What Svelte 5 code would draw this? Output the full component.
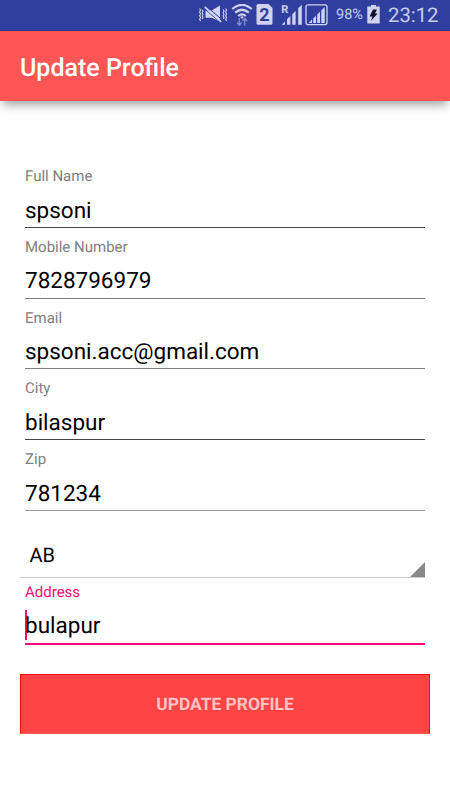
<script>
	let fields = [
		{ id: "name", label: "Full Name", value: "spsoni", line: "dark" },
		{ id: "mobile", label: "Mobile Number", value: "7828796979", line: "mid" },
		{ id: "email", label: "Email", value: "spsoni.acc@gmail.com", line: "mid" },
		{ id: "city", label: "City", value: "bilaspur", line: "dark" },
		{ id: "zip", label: "Zip", value: "781234", line: "soft" }
	];
	let state = "AB";
	let address = "bulapur";
</script>

<div class="screen">
	<div class="status">
		<svg class="mute" width="30" height="20" viewBox="0 0 30 20">
			<path class="thin" d="M1.6 3.5l1 1.8-1 1.8 1 1.8-1 1.8 1 1.8-1 1.8 1 1.8M4.2 4.5l.8 1.6-.8 1.6.8 1.6-.8 1.6.8 1.6-.8 1.6M25.2 4.5l.8 1.6-.8 1.6.8 1.6-.8 1.6.8 1.6-.8 1.6M27.6 3.5l1 1.8-1 1.8 1 1.8-1 1.8 1 1.8-1 1.8 1 1.8" />
			<path class="fill" d="M7.5 5.5h6L22 .5v16l-8.5-3.7h-6z" />
			<path class="cut" d="M6.5 3.8L23.5 18.3" />
			<path class="cut" d="M7.5 .5L25 15.5" />
			<path class="slash" d="M6.8 2L23.2 16.8" />
		</svg>
		<svg class="wifi" width="22" height="23" viewBox="0 0 22 23">
			<path class="arc" d="M1.2 5Q11-3.2 20.8 5M4.2 8.7Q11 2.8 17.8 8.7M7.2 12Q11 8.8 14.8 12" />
			<path class="fill" d="M9.2 13Q11 11.6 12.8 13L11 15z" />
			<path class="arrows" d="M8.3 14v7M6 18.4l2.3 2.7 2.3-2.7M13.7 21.5v-7M11.4 17l2.3-2.7L16 17" />
		</svg>
		<svg class="sim" width="17" height="22" viewBox="0 0 17 22">
			<path class="fill" d="M2 0h10.5L16.5 4v15.2a1.6 1.6 0 0 1-1.6 1.6H2A1.6 1.6 0 0 1 .5 19.2V1.6A1.6 1.6 0 0 1 2 0z" />
			<text class="two" x="8.4" y="17">2</text>
		</svg>
		<svg class="roam" width="22" height="22" viewBox="0 0 22 22">
			<path class="fill" d="M4 17.4v3.4H.6zM6 15.3l3.4-3.2v8.7H6zM11.3 10.2l3.3-3.4v14h-3.3zM17.2 4.3L20.8.8v20h-3.6z" />
			<text class="r" x="0.2" y="8.8">R</text>
		</svg>
		<svg class="boxed" width="23" height="22" viewBox="0 0 23 22">
			<rect class="frame" x="1" y=".8" width="21" height="19.8" rx="2" />
			<path class="fill" d="M7 15.6V19H3.6zM8.2 14.5l2.8-2.8V19H8.2zM12.2 10.5L15 7.7V19h-2.8zM16.3 6.5l3.4-3.4V19h-3.4z" />
		</svg>
		<span class="percent">98%</span>
		<svg class="battery" width="13" height="20" viewBox="0 0 13 20">
			<path class="fill" d="M4 0h5v1.5h3.7v17H.3v-17H4z" />
			<path class="bolt" d="M6 4.5h4L8 8.5h2.7L3.8 16l1.7-4.5H2.6z" />
		</svg>
		<span class="time">23:12</span>
	</div>

	<header>
		<h1>Update Profile</h1>
	</header>

	<form>
		{#each fields as field (field.id)}
			<div class="field {field.line}">
				<label for={field.id}>{field.label}</label>
				<input id={field.id} type="text" bind:value={field.value}>
			</div>
		{/each}

		<div class="spinner">
			<span>{state}</span>
			<svg width="15" height="15" viewBox="0 0 15 15"><path d="M15 0v15H0z" /></svg>
		</div>

		<div class="field active">
			<label for="address">Address</label>
			<div class="entry">
				<i class="caret"></i>
				<input id="address" type="text" bind:value={address}>
			</div>
		</div>

		<button type="button">UPDATE PROFILE</button>
	</form>
</div>

<style>
	:global(body) {
		background: #fff;
	}
	.screen {
		width: 450px;
		height: 800px;
		overflow: hidden;
		background: #fff;
		font-family: Roboto, sans-serif;
		text-rendering: geometricPrecision;
	}
	.status {
		display: flex;
		align-items: flex-start;
		box-sizing: border-box;
		height: 31px;
		padding: 4px 0 0 198px;
		background: #303f9f;
		border-bottom: 1px solid #283593;
		color: #c9cdec;
	}
	.status svg {
		flex: none;
	}
	.fill {
		fill: #d0d3ee;
	}
	.thin, .slash, .cut, .arc, .arrows, .frame {
		fill: none;
		stroke: #d0d3ee;
	}
	.thin {
		stroke-width: 1.1;
	}
	.slash {
		stroke-width: 1.7;
	}
	.cut {
		stroke: #303f9f;
		stroke-width: 1;
	}
	.arc {
		stroke-width: 2.2;
	}
	.arrows {
		stroke: #7d87c9;
		stroke-width: 1.5;
	}
	.frame {
		stroke-width: 1.3;
	}
	.mute {
		margin-top: 1px;
	}
	.wifi {
		margin-left: 3px;
	}
	.sim {
		margin-left: 3px;
	}
	.two {
		fill: #303f9f;
		font-size: 18px;
		font-weight: 700;
		text-anchor: middle;
	}
	.roam {
		margin-left: 8px;
	}
	.r {
		fill: #d0d3ee;
		font-size: 11px;
		font-weight: 700;
	}
	.boxed {
		margin-left: 2px;
	}
	.percent {
		width: 31px;
		margin-left: 8px;
		font-size: 14.5px;
		line-height: 22px;
	}
	.battery {
		margin-top: 1px;
	}
	.bolt {
		fill: #10132c;
	}
	.time {
		margin-left: 8px;
		font-size: 20.3px;
		line-height: 22px;
	}
	header {
		display: flex;
		align-items: center;
		height: 70px;
		padding-left: 20px;
		background: #ff5555;
		box-shadow: 0 7px 9px -3px rgba(0, 0, 0, 0.36);
	}
	h1 {
		margin: 5px 0 0;
		color: #fff;
		font-size: 25px;
		font-weight: 500;
		line-height: 30px;
	}
	form {
		padding: 56.3px 20px 0;
	}
	.field {
		display: flex;
		flex-direction: column;
		box-sizing: border-box;
		height: 70.7px;
		margin: 0 5px;
		padding-top: 10px;
		border-bottom: 1px solid #444;
	}
	.mid {
		border-color: #808080;
	}
	.soft {
		border-color: #999;
	}
	label {
		color: #808080;
		font-size: 15px;
		line-height: 18px;
	}
	input {
		box-sizing: border-box;
		width: 100%;
		height: 30px;
		margin-top: 10.5px;
		padding: 0;
		border: none;
		outline: none;
		background: transparent;
		color: #000;
		font-family: inherit;
		font-size: 22.5px;
		text-rendering: inherit;
	}
	.spinner {
		display: flex;
		align-items: flex-end;
		justify-content: space-between;
		box-sizing: border-box;
		height: 67.2px;
		margin-right: 5px;
		padding-left: 9.5px;
		border-bottom: 1px solid #ccc;
	}
	.spinner span {
		padding-bottom: 10px;
		font-size: 20px;
		line-height: 24px;
	}
	.spinner svg {
		margin-bottom: -0.4px;
	}
	.spinner path {
		fill: #888;
	}
	.active {
		height: 67px;
		padding-top: 5px;
		border-bottom: 2px solid #ff0a78;
	}
	.active label {
		color: #ff0a78;
	}
	.entry {
		display: flex;
		margin-top: 9px;
	}
	.entry input {
		margin-top: 1px;
		margin-left: -2px;
	}
	.caret {
		flex: none;
		width: 2px;
		height: 30px;
		background: #ff0a78;
	}
	button {
		display: block;
		box-sizing: border-box;
		width: 410px;
		height: 60px;
		margin-top: 29px;
		padding: 2px 0 0;
		border: 1px solid #ff0a0a;
		border-bottom-color: #ff5c5c;
		background: #ff4444;
		color: #ffc3c3;
		font-family: inherit;
		font-size: 17.4px;
		font-weight: 700;
		text-rendering: inherit;
	}
</style>
